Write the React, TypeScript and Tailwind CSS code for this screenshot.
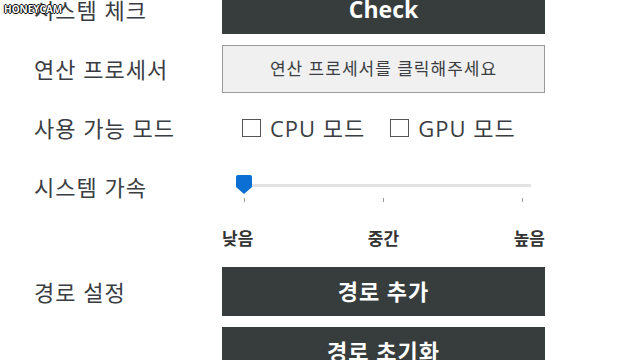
import React from "react";

const font = { fontFamily: '"Open Sans", "Noto Sans CJK KR", sans-serif' };

const Label = ({ children }: { children: React.ReactNode }) => (
  <div className="w-[222px] shrink-0 pl-[34px] text-[22px] tracking-[1px] text-[#3a3d42] leading-none">{children}</div>
);

const DarkButton = ({ children, className = "" }: { children: React.ReactNode; className?: string }) => (
  <button className={`w-[323px] h-[49px] bg-[#373d3d] text-white font-bold flex items-center justify-center ${className}`}>
    {children}
  </button>
);

const Check = ({ label }: { label: string }) => (
  <label className="flex items-center gap-[9px]">
    <span className="w-[19px] h-[18px] border border-[#555] bg-white" />
    <span className="text-[22px] tracking-[1px] text-[#3a3d42] leading-none">{label}</span>
  </label>
);

export default function App() {
  return (
    <div className="relative w-[640px] h-[360px] overflow-hidden bg-white" style={font}>
      {/* watermark */}
      <div className="absolute left-[4px] top-[2px] text-[10px] font-bold text-white [text-shadow:1px_0_0_#000,-1px_0_0_#000,0_1px_0_#000,0_-1px_0_#000] z-10">
        HONEYCAM
      </div>

      <div className="flex flex-col -mt-[15px]">
        <div className="flex items-center">
          <Label>시스템 체크</Label>
          <DarkButton className="text-[23px]">Check</DarkButton>
        </div>

        <div className="flex items-center mt-[11px]">
          <Label>연산 프로세서</Label>
          <button className="w-[323px] h-[48px] bg-[#f0f0f0] border border-[#9a9a9a] text-[17px] tracking-[1px] text-[#3a3d42] flex items-center justify-center">
            연산 프로세서를 클릭해주세요
          </button>
        </div>

        <div className="flex items-center h-[70px]">
          <Label>사용 가능 모드</Label>
          <div className="flex items-center gap-[25px] pl-[20px]">
            <Check label="CPU 모드" />
            <Check label="GPU 모드" />
          </div>
        </div>

        <div className="flex items-center h-[48px]">
          <Label>시스템 가속</Label>
          <div className="relative w-[323px] h-[48px]">
            <div className="absolute left-[16px] right-[14px] top-[21px] h-[3px] bg-[#e2e2e2]" />
            <svg className="absolute left-[14px] top-[12px]" width="16" height="19" viewBox="0 0 16 19">
              <path d="M2 0h12a2 2 0 0 1 2 2v10l-8 7-8-7V2a2 2 0 0 1 2-2z" fill="#0b6fd3" />
            </svg>
            <div className="absolute left-[22px] top-[35px] w-px h-[4px] bg-[#9a9a9a]" />
            <div className="absolute left-[161px] top-[35px] w-px h-[4px] bg-[#9a9a9a]" />
            <div className="absolute left-[300px] top-[35px] w-px h-[4px] bg-[#9a9a9a]" />
          </div>
        </div>

        <div className="flex items-center h-[56px]">
          <Label>{""}</Label>
          <div className="w-[323px] flex justify-between text-[17px] font-semibold text-[#333]">
            <span>낮음</span>
            <span>중간</span>
            <span>높음</span>
          </div>
        </div>

        <div className="flex items-center">
          <Label>경로 설정</Label>
          <DarkButton className="text-[22px] tracking-[1px]">경로 추가</DarkButton>
        </div>

        <div className="flex items-center mt-[11px]">
          <Label>{""}</Label>
          <DarkButton className="text-[22px] tracking-[1px]">경로 초기화</DarkButton>
        </div>
      </div>
    </div>
  );
}
